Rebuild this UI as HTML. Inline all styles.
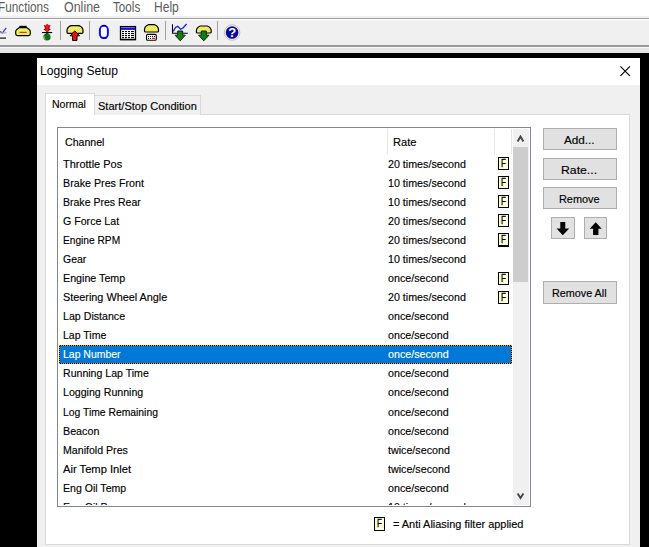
<!DOCTYPE html>
<html>
<head>
<meta charset="utf-8">
<title>Logging Setup</title>
<style>
html,body{margin:0;padding:0;}
body{width:649px;height:547px;overflow:hidden;position:relative;background:#000;font-family:"Liberation Sans","DejaVu Sans",sans-serif;font-size:11.5px;color:#000;}
.abs{position:absolute;}
#menubar{left:0;top:0;width:649px;height:16px;background:#fff;}
#mbar2{left:0;top:16px;width:649px;height:2px;background:#f0f0f0;}
#tline1{left:0;top:18px;width:649px;height:1px;background:#a0a0a0;}
#toolbar{left:0;top:19px;width:649px;height:27px;background:#f0f0f0;border-top:1px solid #fff;box-sizing:border-box;}
#tline2{left:0;top:45px;width:649px;height:2px;background:#9a9a9a;}
#tline3{left:0;top:47px;width:649px;height:6px;background:#e6e6e6;border-top:1px solid #f8f8f8;box-sizing:border-box;}
.menu{position:absolute;top:-1px;font-size:14px;line-height:16px;color:#5c5c5c;white-space:nowrap;transform-origin:0 0;transform:scaleX(0.86);}
.tsep{position:absolute;top:21px;width:1px;height:19px;background:#a0a0a0;}
#dialog{left:37px;top:58px;width:603px;height:489px;background:#f0f0f0;}
#title{left:0;top:0;width:603px;height:27px;background:#fff;}
#titletext{left:3px;top:5px;font-size:13px;line-height:16px;white-space:nowrap;transform-origin:0 0;transform:scaleX(0.93);}
#pane{left:8px;top:56px;width:585px;height:431px;background:#fff;border:1px solid #d9d9d9;box-sizing:border-box;}
.tab{position:absolute;box-sizing:border-box;border:1px solid #d9d9d9;white-space:nowrap;}
#tab1{left:8px;top:35px;width:50px;height:21px;background:#fff;border-bottom:none;}
#tabcover{left:9px;top:56px;width:48px;height:1px;background:#fff;}
#tab2{left:57px;top:37px;width:107px;height:20px;background:#f0f0f0;border-bottom:none;}
#list{left:20px;top:69px;width:474px;height:380px;background:#fff;border:1px solid #828790;box-sizing:border-box;overflow:hidden;}
#lc{left:0;top:1px;width:471px;height:376px;overflow:hidden;}
.row{position:absolute;left:1px;width:453px;height:19px;}
.t{position:absolute;white-space:nowrap;transform-origin:0 0;transform:scaleX(0.939);font-size:11.5px;line-height:14px;-webkit-text-stroke:0.15px currentColor;}
.F{position:absolute;width:9px;height:11px;border:1px solid #000;background:#ffffdc;}
.F span{position:absolute;left:1.5px;top:-1px;font-size:10px;line-height:13px;transform-origin:0 0;transform:scaleX(0.8);-webkit-text-stroke:0.3px #000;}
.sel{background:repeating-conic-gradient(#000 0 25%,#ff9428 0 50%) 0 0/2px 2px;color:#fff;}
.sel:before{content:"";position:absolute;left:1px;top:1px;right:1px;bottom:1px;background:#0078d7;}
.btn{position:absolute;box-sizing:border-box;border:1px solid #adadad;background:#e1e1e1;}
.hsep{position:absolute;top:0px;width:1px;height:25px;background:#e5e5e5;}
</style>
</head>
<body>
<div id="menubar" class="abs">
<span class="menu" style="left:-2.5px;transform:scaleX(0.84)">Functions</span>
<span class="menu" style="left:63.5px;transform:scaleX(0.89)">Online</span>
<span class="menu" style="left:113.3px;transform:scaleX(0.835)">Tools</span>
<span class="menu" style="left:153.5px">Help</span>
</div>
<div id="mbar2" class="abs"></div>
<div id="tline1" class="abs"></div>
<div id="toolbar" class="abs"></div>
<div id="tline2" class="abs"></div>
<div id="tline3" class="abs"></div>
<div class="tsep" style="left:60px"></div>
<div class="tsep" style="left:89px"></div>
<div class="tsep" style="left:165px"></div>
<div class="tsep" style="left:217px"></div>
<svg class="abs" style="left:0;top:19px" width="260" height="27" viewBox="0 19 260 27">
<defs>
<pattern id="yd" width="2" height="2" patternUnits="userSpaceOnUse"><rect width="2" height="2" fill="#fafa20"/><rect width="1" height="1" fill="#e0e0a0"/><rect x="1" y="1" width="1" height="1" fill="#e0e0a0"/></pattern>
</defs>
<!-- icon0 partial chart -->
<path d="M0 31.6 L2.4 33 L6.2 27.8" stroke="#2030ff" stroke-width="1.2" fill="none"/>
<rect x="0" y="32.3" width="6.5" height="1" fill="#a0a0a0"/>
<rect x="0" y="37.5" width="6" height="1.2" fill="#101010"/>
<!-- icon1 yellow dome w/ red line -->
<path d="M19.3 27.6 H26.7 L29.2 29.4 Q30.3 30.2 30.3 31.6 V33.8 Q30.3 35.6 28.5 35.6 H17.5 Q15.7 35.6 15.7 33.8 V31.6 Q15.7 30.2 16.8 29.4 Z" fill="url(#yd)" stroke="#000" stroke-width="1.2"/>
<rect x="19.3" y="25.8" width="7.4" height="2" fill="#000"/>
<rect x="19.5" y="31.8" width="7.2" height="1.1" fill="#c03020"/>
<!-- icon2 thermometer -->
<rect x="44.9" y="24.8" width="4.6" height="6.6" rx="2" fill="#a81414"/><rect x="46" y="24" width="2.4" height="9" rx="1.2" fill="#ff1010"/>
<path d="M44 25.3 L45.5 26.8 M44 30 L45.5 28.8 M50.3 25.3 L48.8 26.8 M50.3 30 L48.8 28.8 M44.8 27.8 V 28 M49.4 27.8 V28" stroke="#901010" stroke-width="1.2" fill="none"/>
<circle cx="47" cy="37" r="3.6" fill="#087010"/>
<rect x="45.8" y="33" width="2.6" height="3" fill="#087010"/>
<path d="M44 36 Q43.8 38.5 45.5 39.8" stroke="#a0a0a0" stroke-width="1.2" fill="none"/>
<rect x="42" y="32" width="10.2" height="1.1" fill="#000"/>
<!-- icon3 dome + red up arrow -->
<path d="M71 25.6 H79 Q83 27.2 83 30.6 V32.3 Q83 33.4 82 33.4 H68 Q67 33.4 67 32.3 V30.6 Q67 27.2 71 25.6 Z" fill="url(#yd)" stroke="#000" stroke-width="1.2"/>
<path d="M74.8 30.8 L79.5 35.8 H77 V40.5 H72.6 V35.8 H70.1 Z" fill="#f01010" stroke="#000" stroke-width="1"/>
<!-- icon4 blue 0 -->
<rect x="99.9" y="25.8" width="8" height="12.2" rx="3.6" ry="4.2" fill="#fff" stroke="#1010f0" stroke-width="2"/>
<path d="M102 25.6 H106 M102.5 38.2 H106.5" stroke="#000090" stroke-width="1"/>
<!-- icon5 table -->
<rect x="120.5" y="26.6" width="15" height="13" fill="#fff" stroke="#000" stroke-width="1.3"/>
<rect x="121" y="27.5" width="14" height="2.4" fill="#1010e0"/>
<rect x="120.3" y="38.8" width="15.4" height="1.4" fill="#000"/>
<g fill="#000">
<rect x="122" y="31" width="2" height="1.1"/><rect x="125" y="31" width="2" height="1.1"/><rect x="128" y="31" width="2" height="1.1"/><rect x="131" y="31" width="3" height="1.1"/>
<rect x="122" y="33" width="2" height="1.1"/><rect x="125" y="33" width="2" height="1.1"/><rect x="128" y="33" width="2" height="1.1"/><rect x="131" y="33" width="3" height="1.1"/>
<rect x="122" y="35" width="2" height="1.1"/><rect x="125" y="35" width="2" height="1.1"/><rect x="128" y="35" width="2" height="1.1"/><rect x="131" y="35" width="3" height="1.1"/>
<rect x="122" y="37" width="2" height="1.1"/><rect x="125" y="37" width="2" height="1.1"/><rect x="128" y="37" width="2" height="1.1"/><rect x="131" y="37" width="3" height="1.1"/>
</g>
<!-- icon6 dome + keyboard -->
<path d="M148.3 24.7 H154.7 Q158.5 26.3 158.5 29.8 V31 Q158.5 32 157.5 32 H145.5 Q144.5 32 144.5 31 V29.8 Q144.5 26.3 148.3 24.7 Z" fill="url(#yd)" stroke="#000" stroke-width="1.2"/>
<rect x="146.5" y="34.4" width="9.8" height="5.8" rx="1.3" fill="#fff" stroke="#000" stroke-width="1.1"/>
<g fill="#000"><rect x="148" y="36" width="1" height="1"/><rect x="150" y="36" width="1" height="1"/><rect x="152" y="36" width="1" height="1"/><rect x="154" y="36" width="1" height="1"/><rect x="148" y="38" width="1" height="1"/><rect x="150" y="38" width="1" height="1"/></g>
<rect x="152" y="37.8" width="3" height="1.2" fill="#f01010"/>
<!-- icon7 chart + green arrow -->
<path d="M172.5 24.3 V33.3 H187.8" stroke="#000" stroke-width="1.1" fill="none"/>
<path d="M173.2 31.3 L175.5 27.5 L177.8 26.3 L180.5 29.3 L183 28 L186.6 24" stroke="#1020f0" stroke-width="1.3" fill="none"/>
<path d="M177.7 31 H182.7 V35.2 H185.3 L180.2 40.8 L175.1 35.2 H177.7 Z" fill="#108010" stroke="#102010" stroke-width="1"/>
<!-- icon8 dome + green arrow -->
<path d="M200.3 26 H207.3 Q211.2 27.6 211.2 30.8 V32 Q211.2 33 210.2 33 H197.4 Q196.4 33 196.4 32 V30.8 Q196.4 27.6 200.3 26 Z" fill="url(#yd)" stroke="#000" stroke-width="1.2"/>
<path d="M201.3 31 H206.3 V35.2 H209 L203.8 40.8 L198.6 35.2 H201.3 Z" fill="#108010" stroke="#102010" stroke-width="1"/>
<!-- icon9 help -->
<circle cx="232.1" cy="32.5" r="7.8" fill="#f4f4f4" stroke="#bcbcbc" stroke-width="0.9"/>
<circle cx="232.1" cy="32.5" r="6.3" fill="#0808a0"/>
<text x="232.2" y="37.2" font-family="Liberation Sans, sans-serif" font-weight="bold" font-size="13" fill="#fff" text-anchor="middle">?</text>
</svg>

<div id="dialog" class="abs">
<div id="title" class="abs"><span id="titletext" class="abs">Logging Setup</span>
<svg class="abs" style="left:583px;top:7.7px" width="11" height="11" viewBox="0 0 11 11"><path d="M0.4 0.4 L9.9 9.9 M9.9 0.4 L0.4 9.9" stroke="#000" stroke-width="1.1" fill="none"/></svg></div>
<div id="pane" class="abs"></div>
<div id="tab2" class="tab"><span class="t" style="left:3px;top:3px;transform:scaleX(0.960)">Start/Stop Condition</span></div>
<div id="tabcover" class="abs"></div>
<div id="tab1" class="tab"><span class="t" style="left:6.1px;top:3px;transform:scaleX(0.916)">Normal</span></div>
<div id="list" class="abs"><div id="lc" class="abs">
<span class="t" style="left:6.8px;top:6px;transform:scaleX(0.920)">Channel</span>
<span class="t" style="left:335.3px;top:6px;transform:scaleX(0.969)">Rate</span>
<div class="hsep" style="left:329px"></div><div class="hsep" style="left:436px"></div><div class="hsep" style="left:453px"></div>
<div class="row" style="top:25px"><span class="t" style="left:3.8px;top:3px;transform:scaleX(0.954)">Throttle Pos</span><span class="t" style="left:329.3px;top:3px;transform:scaleX(0.930)">20 times/second</span><div class="F" style="left:439px;top:3px"><span>F</span></div></div>
<div class="row" style="top:44px"><span class="t" style="left:3.8px;top:3px;transform:scaleX(0.931)">Brake Pres Front</span><span class="t" style="left:329.3px;top:3px;transform:scaleX(0.930)">10 times/second</span><div class="F" style="left:439px;top:3px"><span>F</span></div></div>
<div class="row" style="top:63px"><span class="t" style="left:3.8px;top:3px;transform:scaleX(0.915)">Brake Pres Rear</span><span class="t" style="left:329.3px;top:3px;transform:scaleX(0.930)">10 times/second</span><div class="F" style="left:439px;top:3px"><span>F</span></div></div>
<div class="row" style="top:82px"><span class="t" style="left:3.8px;top:3px;transform:scaleX(0.924)">G Force Lat</span><span class="t" style="left:329.3px;top:3px;transform:scaleX(0.930)">20 times/second</span><div class="F" style="left:439px;top:3px"><span>F</span></div></div>
<div class="row" style="top:101px"><span class="t" style="left:3.8px;top:3px;transform:scaleX(0.885)">Engine RPM</span><span class="t" style="left:329.3px;top:3px;transform:scaleX(0.930)">20 times/second</span><div class="F" style="left:439px;top:3px;border-bottom-width:2px"><span>F</span></div></div>
<div class="row" style="top:120px"><span class="t" style="left:3.8px;top:3px;transform:scaleX(0.911)">Gear</span><span class="t" style="left:329.3px;top:3px;transform:scaleX(0.930)">10 times/second</span></div>
<div class="row" style="top:140px"><span class="t" style="left:3.8px;top:2px;transform:scaleX(0.929)">Engine Temp</span><span class="t" style="left:329.3px;top:2px;transform:scaleX(0.930)">once/second</span><div class="F" style="left:439px;top:3px"><span>F</span></div></div>
<div class="row" style="top:159px"><span class="t" style="left:3.8px;top:2px;transform:scaleX(0.943)">Steering Wheel Angle</span><span class="t" style="left:329.3px;top:2px;transform:scaleX(0.930)">20 times/second</span><div class="F" style="left:439px;top:3px"><span>F</span></div></div>
<div class="row" style="top:178px"><span class="t" style="left:3.8px;top:2px;transform:scaleX(0.925)">Lap Distance</span><span class="t" style="left:329.3px;top:2px;transform:scaleX(0.930)">once/second</span></div>
<div class="row" style="top:197px"><span class="t" style="left:3.8px;top:2px;transform:scaleX(0.914)">Lap Time</span><span class="t" style="left:329.3px;top:2px;transform:scaleX(0.930)">once/second</span></div>
<div class="row sel" style="top:216px"><span class="t" style="left:3.8px;top:2px;transform:scaleX(0.910)">Lap Number</span><span class="t" style="left:329.3px;top:2px;transform:scaleX(0.930)">once/second</span></div>
<div class="row" style="top:235px"><span class="t" style="left:3.8px;top:2px;transform:scaleX(0.919)">Running Lap Time</span><span class="t" style="left:329.3px;top:2px;transform:scaleX(0.930)">once/second</span></div>
<div class="row" style="top:254px"><span class="t" style="left:3.8px;top:2px;transform:scaleX(0.923)">Logging Running</span><span class="t" style="left:329.3px;top:2px;transform:scaleX(0.930)">once/second</span></div>
<div class="row" style="top:273px"><span class="t" style="left:3.8px;top:3px;transform:scaleX(0.900)">Log Time Remaining</span><span class="t" style="left:329.3px;top:3px;transform:scaleX(0.930)">once/second</span></div>
<div class="row" style="top:292px"><span class="t" style="left:3.8px;top:3px;transform:scaleX(0.933)">Beacon</span><span class="t" style="left:329.3px;top:3px;transform:scaleX(0.930)">once/second</span></div>
<div class="row" style="top:311px"><span class="t" style="left:3.8px;top:3px;transform:scaleX(0.922)">Manifold Pres</span><span class="t" style="left:329.3px;top:3px;transform:scaleX(0.930)">twice/second</span></div>
<div class="row" style="top:330px"><span class="t" style="left:3.8px;top:3px;transform:scaleX(0.972)">Air Temp Inlet</span><span class="t" style="left:329.3px;top:3px;transform:scaleX(0.930)">twice/second</span></div>
<div class="row" style="top:349px"><span class="t" style="left:3.8px;top:3px;transform:scaleX(0.918)">Eng Oil Temp</span><span class="t" style="left:329.3px;top:3px;transform:scaleX(0.930)">once/second</span></div>
<div class="row" style="top:368px"><span class="t" style="left:3.8px;top:3px;transform:scaleX(0.918)">Eng Oil Pres</span><span class="t" style="left:329.3px;top:3px;transform:scaleX(0.930)">10 times/second</span></div>
<div class="abs" style="left:455px;top:0;width:16px;height:376px;background:#f0f0f0"></div>
<div class="abs" style="left:455px;top:18px;width:15px;height:135px;background:#cdcdcd"></div>
<svg class="abs" style="left:458px;top:6px" width="9" height="8" viewBox="0 0 9 8"><path d="M1.6 6.4 L4.5 1.5 L7.4 6.4" stroke="#444" stroke-width="1.9" fill="none"/></svg>
<svg class="abs" style="left:458px;top:363px" width="9" height="8" viewBox="0 0 9 8"><path d="M1.6 1.4 L4.5 6 L7.4 1.4" stroke="#444" stroke-width="1.9" fill="none"/></svg>
</div></div>
<div class="F" style="left:337px;top:459px;height:12px"><span>F</span></div>
<span class="t" style="left:355.5px;top:459px;transform:scaleX(0.951)">= Anti Aliasing filter applied</span>
<div class="btn" style="left:506px;top:70px;width:74px;height:22px"><span class="t" style="left:20px;top:3.5px;transform:scaleX(1.019)">Add...</span></div>
<div class="btn" style="left:506px;top:100px;width:74px;height:22px"><span class="t" style="left:16.5px;top:3.5px;transform:scaleX(1.065)">Rate...</span></div>
<div class="btn" style="left:506px;top:129px;width:74px;height:22px"><span class="t" style="left:14.5px;top:4px;transform:scaleX(0.948)">Remove</span></div>
<div class="btn" style="left:506px;top:223px;width:74px;height:23px"><span class="t" style="left:8px;top:3.5px;transform:scaleX(0.939)">Remove All</span></div>
<div class="btn" style="left:514px;top:159px;width:24px;height:22px"><svg class="abs" style="left:0;top:0" width="22" height="20" viewBox="552 218 22 20"><path d="M560.3 222 H565.3 V228.4 H569.2 L562.8 235.3 L556.6 228.4 H560.3 Z" fill="#000"/></svg></div>
<div class="btn" style="left:547px;top:159px;width:23px;height:22px"><svg class="abs" style="left:0;top:0" width="21" height="20" viewBox="585 218 21 20"><path d="M595.7 222.3 L601.7 228.8 H598.4 V234.9 H593.1 V228.8 H589.7 Z" fill="#000"/></svg></div>
</div>
</body>
</html>
